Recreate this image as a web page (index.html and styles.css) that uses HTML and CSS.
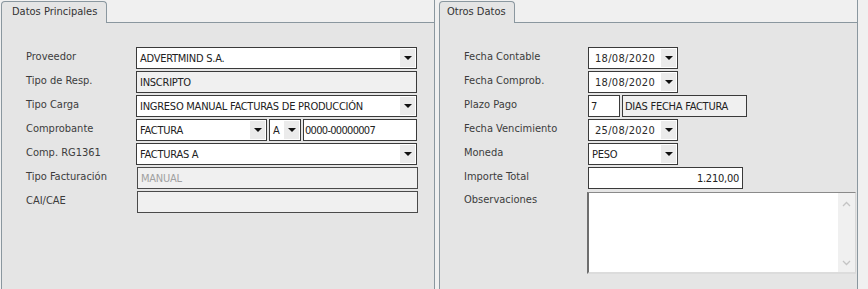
FILE: index.html
```html
<!DOCTYPE html>
<html lang="es">
<head>
<meta charset="utf-8">
<title>Datos</title>
<link rel="stylesheet" href="styles.css">
</head>
<body>
<div class="page">
  <section class="panel panel-left">
    <div class="tabs">
      <div class="tab tab-left">Datos Principales</div>
      <div class="tab-fill"></div>
    </div>
    <div class="panel-body body-left">
      <div class="row">
        <span class="lbl">Proveedor</span>
        <div class="field w-left"><span class="val">ADVERTMIND S.A.</span><span class="arrow"></span></div>
      </div>
      <div class="row">
        <span class="lbl">Tipo de Resp.</span>
        <div class="field ro w-left"><span class="val">INSCRIPTO</span></div>
      </div>
      <div class="row">
        <span class="lbl">Tipo Carga</span>
        <div class="field w-left"><span class="val">INGRESO MANUAL FACTURAS DE PRODUCCIÓN</span><span class="arrow"></span></div>
      </div>
      <div class="row">
        <span class="lbl">Comprobante</span>
        <div class="group">
          <div class="field w-comp"><span class="val">FACTURA</span><span class="arrow"></span></div>
          <div class="field w-letra"><span class="val">A</span><span class="arrow"></span></div>
          <div class="field w-num"><span class="val num">0000-00000007</span></div>
        </div>
      </div>
      <div class="row">
        <span class="lbl">Comp. RG1361</span>
        <div class="field w-left"><span class="val">FACTURAS A</span><span class="arrow"></span></div>
      </div>
      <div class="row">
        <span class="lbl">Tipo Facturación</span>
        <div class="field dis w-left"><span class="val">MANUAL</span></div>
      </div>
      <div class="row">
        <span class="lbl">CAI/CAE</span>
        <div class="field dis w-left"></div>
      </div>
    </div>
  </section>

  <section class="panel panel-right">
    <div class="tabs">
      <div class="tab tab-right">Otros Datos</div>
      <div class="tab-fill"></div>
    </div>
    <div class="panel-body body-right">
      <div class="row">
        <span class="lbl">Fecha Contable</span>
        <div class="field w-date"><span class="val date">18/08/2020</span><span class="arrow"></span></div>
      </div>
      <div class="row">
        <span class="lbl">Fecha Comprob.</span>
        <div class="field w-date"><span class="val date">18/08/2020</span><span class="arrow"></span></div>
      </div>
      <div class="row">
        <span class="lbl">Plazo Pago</span>
        <div class="group">
          <div class="field w-plazo"><span class="val">7</span></div>
          <div class="field ro w-dias"><span class="val">DIAS FECHA FACTURA</span></div>
        </div>
      </div>
      <div class="row">
        <span class="lbl">Fecha Vencimiento</span>
        <div class="field w-date"><span class="val date">25/08/2020</span><span class="arrow"></span></div>
      </div>
      <div class="row">
        <span class="lbl">Moneda</span>
        <div class="field w-date"><span class="val">PESO</span><span class="arrow"></span></div>
      </div>
      <div class="row">
        <span class="lbl">Importe Total</span>
        <div class="field w-importe right"><span class="val">1.210,00</span></div>
      </div>
      <div class="row row-obs">
        <span class="lbl">Observaciones</span>
        <div class="textarea">
          <div class="ta-text"></div>
          <div class="scroll">
            <svg width="9" height="6" viewBox="0 0 9 6"><polyline points="1,5 4.5,1.5 8,5" fill="none" stroke="#c4c4c4" stroke-width="1.3"/></svg>
            <svg width="9" height="6" viewBox="0 0 9 6"><polyline points="1,1 4.5,4.5 8,1" fill="none" stroke="#c4c4c4" stroke-width="1.3"/></svg>
          </div>
        </div>
      </div>
    </div>
  </section>
</div>
</body>
</html>
```

FILE: styles.css
```css
html, body {
  margin: 0;
  padding: 0;
  background: #f0f0f0;
}

.page {
  display: flex;
  gap: 4px;
  height: 289px;
  overflow: hidden;
  padding-left: 1px;
  font-family: "DejaVu Sans Condensed", "DejaVu Sans", sans-serif;
  font-stretch: condensed;
  font-size: 11px;
  color: #3a3a3a;
}

.panel {
  display: flex;
  flex-direction: column;
}

.panel-left { width: 434px; }
.panel-right { width: 419px; }

.tabs {
  display: flex;
  height: 23px;
  flex: none;
}

.tab {
  box-sizing: border-box;
  margin-top: 1px;
  height: 22px;
  border: 1px solid #8a979f;
  border-bottom: none;
  border-radius: 4px 4px 0 0;
  background: #e5e5e5;
  line-height: 20px;
  color: #333;
  white-space: nowrap;
}

.tab-left { width: 106px; padding-left: 10px; }
.tab-right { width: 76px; padding-left: 7px; }

.tab-fill {
  flex: 1;
  border-bottom: 1px solid #8a979f;
  border-right: 1px solid #8a979f;
}

.panel-body {
  flex: 1;
  background: #e5e5e5;
  border-left: 1px solid #8a979f;
  border-right: 1px solid #8a979f;
  padding-top: 24px;
  display: flex;
  flex-direction: column;
  gap: 2px;
}

.body-left { padding-left: 24px; }
.body-right { padding-left: 24px; }

.row {
  display: flex;
  height: 22px;
  flex: none;
}

.lbl {
  flex: none;
  line-height: 19px;
  color: #3c3c3c;
  white-space: nowrap;
}

.body-left .lbl { width: 110px; }
.body-right .lbl { width: 124px; }

.group {
  display: flex;
  gap: 2px;
}

.field {
  box-sizing: border-box;
  height: 22px;
  border: 1px solid #3a3a3a;
  background: #fff;
  display: flex;
  align-items: center;
  padding-left: 3px;
  color: #222;
  white-space: nowrap;
  overflow: hidden;
}

.field .val {
  line-height: 20px;
  padding-top: 1px;
  letter-spacing: -0.25px;
}

.field .val.num { letter-spacing: -0.7px; }

.field.ro { background: #f0f0f0; }

.field.dis {
  background: #f0f0f0;
  border-color: #4a4a4a;
  margin-left: 1px;
}

.field.dis .val { color: #a0a0a0; }

.field.right { justify-content: flex-end; padding-right: 3px; }

.field .val.date {
  letter-spacing: 0.3px;
  padding-left: 3px;
  color: #2a2a2a;
}

.arrow {
  margin-left: auto;
  margin-right: 1px;
  width: 15px;
  height: 18px;
  background: #ebebeb;
  display: flex;
  align-items: center;
  justify-content: center;
  flex: none;
}

.arrow::after {
  content: "";
  border-top: 4px solid #111;
  border-left: 4px solid transparent;
  border-right: 4px solid transparent;
}

.w-left { width: 281px; }
.w-comp { width: 131px; }
.w-letra { width: 32px; }
.w-num { width: 114px; padding-left: 1px; }
.w-date { width: 90px; }
.w-plazo { width: 32px; padding-left: 2px; }
.w-dias { width: 125px; padding-left: 2px; }
.w-importe { width: 155px; }

.row-obs {
  height: 82px;
  margin-top: 1px;
}

.row-obs .lbl { margin-top: -2px; }

.textarea {
  box-sizing: border-box;
  margin-left: -1px;
  width: 269px;
  height: 82px;
  border-top: 1px solid #8a8a8a;
  border-left: 2px solid #6e6e6e;
  border-right: 1px solid #d8d8d8;
  border-bottom: 2px solid #dcdcdc;
  background: #fff;
  display: flex;
}

.ta-text { flex: 1; }

.scroll {
  width: 17px;
  background: #f0f0f0;
  display: flex;
  flex-direction: column;
  justify-content: space-between;
  align-items: center;
  padding: 8px 0 6px;
  box-sizing: border-box;
}
```
